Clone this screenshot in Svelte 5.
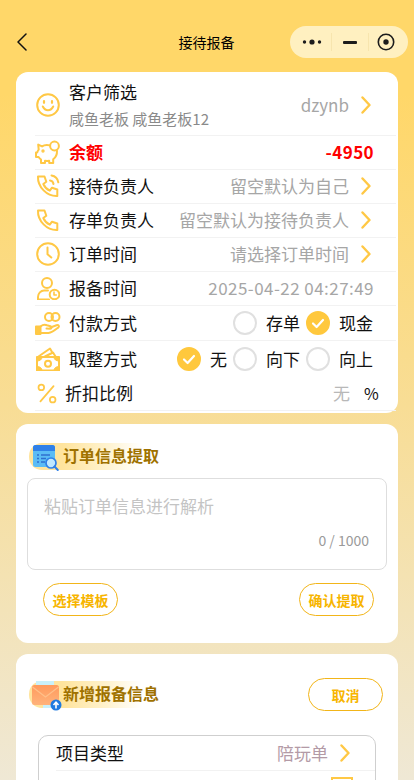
<script>
  const payments = [
    { label: '存单', on: false },
    { label: '现金', on: true }
  ];
  const rounding = [
    { label: '无', on: true },
    { label: '向下', on: false },
    { label: '向上', on: false }
  ];
</script>

{#snippet chevron()}
  <svg class="chev" viewBox="0 0 10 18" fill="none" stroke="#ffc845" stroke-width="2.4" stroke-linecap="round" stroke-linejoin="round"><path d="M1.5 1.5 8.5 9 1.5 16.5"/></svg>
{/snippet}

{#snippet radio(on)}
  <span class="radio" class:on>
    {#if on}
      <svg viewBox="0 0 24 24" fill="none" stroke="#fff" stroke-width="2.2" stroke-linecap="round" stroke-linejoin="round"><path d="M7 12.5 10.6 16 17 9"/></svg>
    {/if}
  </span>
{/snippet}

<div class="page">
  <header class="nav">
    <svg class="back" viewBox="0 0 10 18" fill="none" stroke="#111" stroke-width="1.5" stroke-linecap="round" stroke-linejoin="round"><path d="M9 1 1 9l8 8"/></svg>
    <div class="title">接待报备</div>
    <div class="capsule">
      <span class="cap-cell dots">
        <svg viewBox="0 0 20 8" width="20" height="8" fill="#1c1c1c"><circle cx="2.5" cy="4" r="1.7"/><circle cx="10" cy="4" r="2.6"/><circle cx="17.5" cy="4" r="1.7"/></svg>
      </span>
      <span class="cap-cell sep">
        <svg viewBox="0 0 14 3" width="14" height="3"><rect width="14" height="3" rx="1" fill="#1c1c1c"/></svg>
      </span>
      <span class="cap-cell target">
        <svg viewBox="0 0 18 18" width="18" height="18" fill="none"><circle cx="9" cy="9" r="7.7" stroke="#1c1c1c" stroke-width="1.6"/><circle cx="9" cy="9" r="2.7" fill="#1c1c1c"/></svg>
      </span>
    </div>
  </header>

  <section class="card info">
    <div class="row first has-chev">
      <svg class="ic" viewBox="0 0 24 24" fill="none" stroke="#ffc845" stroke-width="2" stroke-linecap="round"><circle cx="12" cy="12" r="10.8"/><path d="M6.8 13.5c1.2 2.6 3 3.7 5.2 3.7s4-1.1 5.2-3.7"/><path d="M8 8.2v1.6M16 8.2v1.6" stroke-width="2.2"/></svg>
      <div class="stack">
        <div class="label">客户筛选</div>
        <div class="sub">咸鱼老板 咸鱼老板12</div>
      </div>
      <div class="value">dzynb</div>
      {@render chevron()}
    </div>

    <div class="row">
      <svg class="ic wide" viewBox="0 0 26 24" fill="none" stroke="#ffc845" stroke-width="2" stroke-linejoin="round" stroke-linecap="round"><circle cx="19.500" cy="6" r="4.400"/><path d="M15 5.400C12 4.600 9 5 7 6.400L3.200 4.600l.5 5C2.900 10.500 2.500 11.500 2.200 12.500H1v4.500h2.600c.7 1 1.500 1.800 2.400 2.500V23h4v-2.200c1.500.2 2.800.2 4.200 0V23h4v-3.700c2.300-1.700 4-4 3.800-8.500"/><circle cx="8" cy="11" r=".7"/></svg>
      <div class="label red">余额</div>
      <div class="value red money">-4950</div>
    </div>

    <div class="row has-chev">
      <svg class="ic" viewBox="0 0 24 24" fill="none" stroke="#ffc845" stroke-width="2" stroke-linejoin="round" stroke-linecap="round"><path d="M2 2.500h6.500l1.800 5.300-3 2.200c1.300 3 3.500 5.300 6.500 6.700l2.200-3 5.300 1.800V22C11 22.500 1.500 13 2 2.500z"/><path d="M14 6.500c2 .3 3.200 1.500 3.500 3.500M15.500 1.500c3.800.6 6.200 3 6.800 6.800"/></svg>
      <div class="label">接待负责人</div>
      <div class="value">留空默认为自己</div>
      {@render chevron()}
    </div>

    <div class="row has-chev">
      <svg class="ic" viewBox="0 0 24 24" fill="none" stroke="#ffc845" stroke-width="2" stroke-linejoin="round" stroke-linecap="round"><path d="M2 2.500h6.500l1.800 5.300-3 2.200c1.300 3 3.500 5.300 6.500 6.700l2.200-3 5.300 1.800V22C11 22.500 1.500 13 2 2.500z"/></svg>
      <div class="label">存单负责人</div>
      <div class="value">留空默认为接待负责人</div>
      {@render chevron()}
    </div>

    <div class="row has-chev">
      <svg class="ic" viewBox="0 0 24 24" fill="none" stroke="#ffc845" stroke-width="2" stroke-linecap="round" stroke-linejoin="round"><circle cx="12" cy="12" r="10.8"/><path d="M11.500 5.500v6.700l3.800 3.300"/></svg>
      <div class="label">订单时间</div>
      <div class="value">请选择订单时间</div>
      {@render chevron()}
    </div>

    <div class="row">
      <svg class="ic" viewBox="0 0 24 24" fill="none" stroke="#ffc845" stroke-width="2" stroke-linecap="round" stroke-linejoin="round"><circle cx="11" cy="7" r="5"/><path d="M2 23.500v-2.500c0-3.800 3-6.500 6-6.500h4"/><path d="M2 23.500h11"/><circle cx="18.500" cy="18.500" r="4.800"/><path d="M18 16v3h2.300" stroke-width="1.600"/></svg>
      <div class="label">报备时间</div>
      <div class="value stamp">2025-04-22 04:27:49</div>
    </div>

    <div class="row tall">
      <svg class="ic wide" viewBox="0 0 26 24" fill="none" stroke="#ffc845" stroke-width="2" stroke-linecap="round" stroke-linejoin="round"><circle cx="14" cy="6" r="4"/><circle cx="20.500" cy="6" r="4"/><path d="M1 15.500h4.500V23H1z" fill="#ffc845"/><path d="M5.500 15.500c2-1.600 4.500-2 6.500-1.200l3.500 1c1.800.6 1.200 2.700-.5 2.500l-3.500-.3"/><path d="M15.500 16.500l6-2.300c2-.7 3.300 1.100 1.700 2.400-3 2.300-6 4.900-9.700 5.400H5.500"/></svg>
      <div class="label">付款方式</div>
      <div class="options">
        {#each payments as p}
          <div class="option">{@render radio(p.on)}<span>{p.label}</span></div>
        {/each}
      </div>
    </div>

    <div class="row tall plain">
      <svg class="ic" viewBox="0 0 24 24" fill="none" stroke="#ffc845" stroke-linejoin="round" stroke-linecap="round"><path d="M2.500 9.500 14 1.500l2 3.500M9 9.500l8-4 2.500 4" stroke-width="2"/><path d="M1 10h22v13.500H1z" stroke-width="2"/><path d="M1 10h5c0 2.500-2 4-5 4zM23 10h-5c0 2.500 2 4 5 4zM1 23.500h5c0-2.500-2-4-5-4zM23 23.500h-5c0-2.500 2-4 5-4z" fill="#ffc845" stroke-width="1"/><circle cx="12" cy="16.700" r="3" stroke-width="2"/></svg>
      <div class="label">取整方式</div>
      <div class="options">
        {#each rounding as p}
          <div class="option">{@render radio(p.on)}<span>{p.label}</span></div>
        {/each}
      </div>
    </div>

    <div class="row discount">
      <svg class="ic-sm" viewBox="0 0 22 24" fill="none" stroke="#ffc845" stroke-width="2" stroke-linecap="round"><circle cx="4.500" cy="5" r="3.200"/><circle cx="17.500" cy="19" r="3.200"/><path d="M18.500 3.500 3.500 21"/></svg>
      <div class="label">折扣比例</div>
      <div class="value none">无</div>
      <div class="unit">%</div>
    </div>
  </section>

  <section class="card extract">
    <div class="heading">
      <div class="band">
        <svg class="hicon" viewBox="0 0 32 30" fill="none">
          <rect x="2" y="2" width="22" height="22" rx="2.500" fill="#5bbcf5"/>
          <path d="M2 4.500A2.500 2.500 0 0 1 4.500 2h17A2.500 2.500 0 0 1 24 4.500V8H2z" fill="#2f80e8"/>
          <path d="M6 12h2M10 12h9M6 15.500h2M10 15.500h5M6 19h2M10 19h4" stroke="#2f6fd0" stroke-width="1.400"/>
          <circle cx="20" cy="20" r="5" fill="#bfe8ff" stroke="#2f80e8" stroke-width="1.700"/>
          <path d="M23.500 23.500l3.300 3.500" stroke="#2f80e8" stroke-width="2" stroke-linecap="round"/>
        </svg>
        <h2>订单信息提取</h2>
      </div>
    </div>
    <div class="textarea">
      <div class="placeholder">粘贴订单信息进行解析</div>
      <div class="count">0 / 1000</div>
    </div>
    <div class="actions">
      <button class="btn">选择模板</button>
      <button class="btn">确认提取</button>
    </div>
  </section>

  <section class="card add">
    <div class="heading between">
      <div class="band">
        <svg class="hicon" viewBox="0 0 32 30" fill="none">
          <defs>
            <linearGradient id="env" x1="0" y1="0" x2="0" y2="1">
              <stop offset="0" stop-color="#ff9a5c"/>
              <stop offset="1" stop-color="#ffb27a"/>
            </linearGradient>
          </defs>
          <rect x="5" y="0" width="18" height="4" fill="#c9f0fa"/>
          <rect x="12" y="22" width="16" height="5" fill="#c9f0fa"/>
          <rect x="1" y="4" width="27" height="20" rx="2.500" fill="url(#env)"/>
          <path d="M1.500 6 14.500 16 27.500 6" stroke="#ffc08a" stroke-width="1.200"/>
          <circle cx="25" cy="24" r="5.500" fill="#1f7ae0"/>
          <path d="M25 27.500V21.500M22.500 24l2.500-2.700 2.500 2.700" stroke="#fff" stroke-width="1.600"/>
        </svg>
        <h2>新增报备信息</h2>
      </div>
      <button class="btn cancel">取消</button>
    </div>
    <div class="inner">
      <div class="inner-row">
        <div class="label">项目类型</div>
        <div class="value pink">陪玩单</div>
        {@render chevron()}
      </div>
      <div class="inner-row">
        <div class="label">定价</div>
        <div class="value">对接人</div>
        <span class="box"></span>
      </div>
    </div>
  </section>
</div>

<style>
  :global(html), :global(body) {
    margin: 0;
    height: 100%;
    overflow: hidden;
  }
  .page {
    height: 780px;
    overflow: hidden;
    box-sizing: border-box;
    padding-top: 26px;
    background: linear-gradient(180deg, #ffd769 0%, #ffd769 12%, #f8dd95 52%, #efe8d5 100%);
    font-family: "Noto Sans CJK SC", "Noto Sans", sans-serif;
    font-size: 17px;
    color: #111;
  }
  .nav {
    display: grid;
    grid-template-columns: 1fr auto 1fr;
    align-items: center;
    height: 32px;
    padding: 0 6px;
    margin-bottom: 14px;
  }
  .back { width: 10px; height: 18px; margin-left: 11px; }
  .title { font-size: 14px; line-height: 20px; color: #000; padding-right: 1px; }
  .capsule {
    justify-self: end;
    width: 118px;
    height: 32px;
    border-radius: 16px;
    background: #fff0c0;
    display: grid;
    grid-template-columns: 41px 38px 39px;
    align-items: center;
  }
  .cap-cell {
    display: flex;
    align-items: center;
    justify-content: center;
    height: 18px;
  }
  .cap-cell.dots { padding-left: 3px; }
  .cap-cell.target { padding-right: 5px; }
  .cap-cell.sep {
    border-left: 1px solid #f7e5ae;
    border-right: 1px solid #f7e5ae;
  }

  .card {
    margin: 0 16px 11px;
    background: #fff;
    border-radius: 12px;
  }
  .info {
    height: 341px;
    box-sizing: border-box;
    padding: 0 2px 0 19px;
  }
  .row {
    display: flex;
    align-items: center;
    height: 34px;
    border-bottom: 1px solid #f2f2f2;
    box-sizing: border-box;
    padding-right: 22px;
  }
  .row.has-chev { padding-right: 25px; }
  .row.first { height: 63.500px; padding-top: 3px; }
  .row.tall { height: 35px; padding-right: 23px; }
  .row.plain { border-bottom: 0; height: 36px; }
  .row.discount { height: 34px; padding-right: 17px; }
  .ic { width: 24px; height: 24px; flex: none; margin: 0 9px 0 1px; }
  .ic.wide { width: 26px; margin: 0 8px 0 0; }
  .ic-sm { width: 20px; height: 21px; flex: none; margin: 0 8px 0 2px; }
  .label { font-size: 17px; line-height: 24px; white-space: nowrap; }
  .stack { display: flex; flex-direction: column; gap: 4px; padding-top: 3px; margin-top: -3px; }
  .sub { font-size: 15px; line-height: 22px; color: #8a8a8a; white-space: nowrap; }
  .value {
    margin-left: auto;
    color: #a6a6a6;
    line-height: 24px;
    white-space: nowrap;
  }
  .red { color: #ff0000; font-weight: 700; }
  .money { letter-spacing: 0.400px; }
  .stamp { letter-spacing: 0.450px; }
  .chev { width: 10px; height: 18px; flex: none; margin-left: 12px; }
  .options { margin-left: auto; display: flex; align-items: center; gap: 6px; }
  .option { display: flex; align-items: center; gap: 9px; line-height: 24px; }
  .radio {
    width: 24px;
    height: 24px;
    box-sizing: border-box;
    border-radius: 50%;
    border: 2px solid #e0e0e0;
    display: block;
    flex: none;
  }
  .radio.on { background: #ffc83d; border-color: #ffc83d; }
  .radio svg { display: block; width: 24px; height: 24px; margin: -2px; }
  .none { color: #b8b8b8; }
  .unit { margin-left: 14px; width: 15px; line-height: 24px; font-size: 16px; }

  .extract { height: 219px; box-sizing: border-box; padding: 19px 11px 0; }
  .heading { display: flex; align-items: center; }
  .between { justify-content: space-between; }
  .band {
    display: flex;
    align-items: center;
    width: 112px;
    height: 27px;
    margin-left: 2px;
    border-radius: 13px 0 0 13px;
    background: linear-gradient(90deg, #ffe49d 0%, #ffe49d 30%, #fff3cf 70%, #ffffff 100%);
  }
  .hicon { width: 32px; height: 30px; flex: none; margin: 2px 1px 0 2px; }
  h2 {
    margin: 0 0 4px -1px;
    font-size: 16px;
    font-weight: 700;
    line-height: 24px;
    color: #9f7200;
    white-space: nowrap;
  }
  .textarea {
    margin-top: 8px;
    height: 92px;
    box-sizing: border-box;
    border: 1px solid #dedede;
    border-radius: 8px;
    padding: 14px 16px 0;
    display: flex;
    flex-direction: column;
  }
  .placeholder { color: #c4c4c4; line-height: 26px; }
  .count { margin: 11px 1px 0 0; align-self: flex-end; font-size: 14px; line-height: 20px; color: #9a9a9a; }
  .actions { display: flex; justify-content: space-between; padding: 13px 13px 0 16px; }
  .btn {
    width: 75px;
    height: 33px;
    padding: 0;
    background: #fff;
    border: 1px solid #f2b519;
    border-radius: 17px;
    color: #f7b500;
    font: 700 14px/20px "Noto Sans CJK SC", "Noto Sans", sans-serif;
  }

  .add { height: 200px; box-sizing: border-box; padding: 24px 15px 0 11px; }
  .cancel { flex: none; }
  .inner {
    margin: 24px -6px 0 11px;
    width: 338px;
    box-sizing: border-box;
    border: 1px solid #cfcfcf;
    border-radius: 10px;
    padding-left: 17px;
  }
  .inner-row {
    display: flex;
    align-items: center;
    height: 34px;
    border-bottom: 1px solid #f2f2f2;
    padding-right: 25px;
  }
  .pink { color: #b39aa6; }
  .box {
    width: 22px;
    height: 22px;
    border: 2px solid #ffc845;
    box-sizing: border-box;
    margin-left: 10px;
    margin-right: -3px;
  }
</style>
